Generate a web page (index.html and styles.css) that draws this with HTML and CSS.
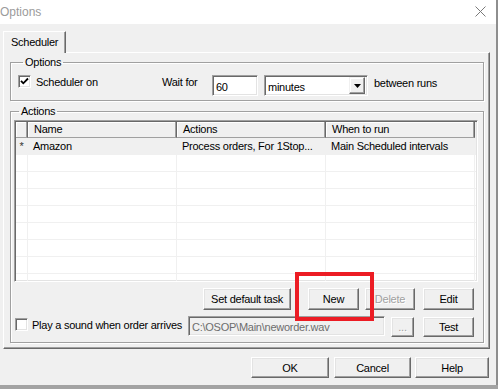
FILE: index.html
```html
<!DOCTYPE html>
<html>
	<head>
		<meta charset="UTF-8">
		<title>Options</title>
		<link rel="stylesheet" href="styles.css">
	</head>
	<body>
		<div class="window">
			<div class="titlebar">
				<span class="title">Options</span>
				<svg class="close" width="11" height="11" viewBox="0 0 11 11"><path d="M0.5 0.5L10.5 10.5M10.5 0.5L0.5 10.5" stroke="#7a7a7a" stroke-width="1" fill="none"/></svg>
			</div>
			<div class="client">
				<div class="tabs"><div class="tab">Scheduler</div></div>
				<div class="tabpage">
					<fieldset class="group group-options">
						<legend>Options</legend>
						<div class="options-row">
							<span class="checkbox"><svg width="9" height="9" viewBox="0 0 9 9"><path d="M1 3.8L3.3 6.3L8 1.5" stroke="#000" stroke-width="1.8" fill="none"/></svg></span>
							<span class="lbl sched-lbl">Scheduler on</span>
							<span class="lbl wait-lbl">Wait for</span>
							<input class="edit wait-edit" type="text" value="60">
							<div class="combo">
								<span class="combo-text">minutes</span>
								<span class="combo-btn"><svg width="7" height="4" viewBox="0 0 7 4"><path d="M0 0H7L3.5 4Z" fill="#000"/></svg></span>
							</div>
							<span class="lbl runs-lbl">between runs</span>
						</div>
					</fieldset>
					<fieldset class="group group-actions">
						<legend>Actions</legend>
						<div class="list">
							<div class="list-head">
								<div class="hcell ind"></div>
								<div class="hcell">Name</div>
								<div class="hcell">Actions</div>
								<div class="hcell">When to run</div>
							</div>
							<div class="list-body">
								<div class="lrow current"><div class="cell ind">*</div><div class="cell">Amazon</div><div class="cell">Process orders, For 1Stop...</div><div class="cell">Main Scheduled intervals</div></div>
								<div class="lrow"><div class="cell ind"></div><div class="cell"></div><div class="cell"></div><div class="cell"></div></div>
								<div class="lrow"><div class="cell ind"></div><div class="cell"></div><div class="cell"></div><div class="cell"></div></div>
								<div class="lrow"><div class="cell ind"></div><div class="cell"></div><div class="cell"></div><div class="cell"></div></div>
								<div class="lrow"><div class="cell ind"></div><div class="cell"></div><div class="cell"></div><div class="cell"></div></div>
								<div class="lrow"><div class="cell ind"></div><div class="cell"></div><div class="cell"></div><div class="cell"></div></div>
								<div class="lrow"><div class="cell ind"></div><div class="cell"></div><div class="cell"></div><div class="cell"></div></div>
								<div class="lrow"><div class="cell ind"></div><div class="cell"></div><div class="cell"></div><div class="cell"></div></div>
								<div class="lrow"><div class="cell ind"></div><div class="cell"></div><div class="cell"></div><div class="cell"></div></div>
							</div>
						</div>
						<div class="btn-row">
							<button class="btn btn-default">Set default task</button>
							<button class="btn btn-new">New</button>
							<button class="btn btn-delete" disabled>Delete</button>
							<button class="btn btn-edit">Edit</button>
						</div>
						<div class="sound-row">
							<span class="checkbox unchecked"></span>
							<span class="lbl sound-lbl">Play a sound when order arrives</span>
							<input class="edit path-edit" type="text" value="C:\OSOP\Main\neworder.wav" disabled>
							<button class="btn btn-browse" disabled>...</button>
							<button class="btn btn-test">Test</button>
						</div>
					</fieldset>
				</div>
				<div class="footer">
					<button class="btn btn-ok">OK</button>
					<button class="btn btn-cancel">Cancel</button>
					<button class="btn btn-help">Help</button>
				</div>
			</div>
			<div class="marker"></div>
		</div>
		<div class="taskbar"></div>
	</body>
</html>
```

FILE: styles.css
```css
*{
	padding: 0;
	margin: 0;
	box-sizing: border-box;
}
body{
	width: 498px;
	height: 389px;
	overflow: hidden;
	background: #f0f0f0;
	font-family: "Liberation Sans", Arial, sans-serif;
	font-size: 11px;
	letter-spacing: -0.25px;
	color: #000;
}
.window{
	position: relative;
	width: 498px;
	height: 385px;
	border-right: 2px solid #8e8e8e;
	background: #f0f0f0;
}
.titlebar{
	height: 24px;
	background: #fff;
	display: flex;
	align-items: center;
	justify-content: space-between;
	padding: 0 10px 0 0;
}
.title{
	font-size: 12px;
	letter-spacing: 0;
	color: #9b9b9b;
	margin-top: -1px;
}
.close{
	display: block;
	margin-top: -2px;
}
.client{
	padding: 7px 7px 0 3px;
}
.tabs{
	display: flex;
	height: 21px;
}
.tab{
	position: relative;
	z-index: 1;
	width: 63px;
	height: 22px;
	padding: 4px 0 0 7px;
	line-height: 13px;
	background: #f0f0f0;
	border-top: 1px solid #fff;
	border-left: 1px solid #fff;
	border-right: 1px solid #696969;
	box-shadow: inset -1px 0 #a0a0a0;
}
.tabpage{
	width: 487px;
	height: 297px;
	padding: 1px 0 0 6px;
	border: 1px solid;
	border-color: #fff #696969 #696969 #fff;
	box-shadow: inset -1px -1px #a0a0a0;
}
.group{
	width: 474px;
	min-width: 0;
	border: 1px solid #a0a0a0;
	box-shadow: 1px 1px 0 #fff, inset 1px 1px 0 #fff;
}
.group legend{
	margin-left: 5px;
	padding: 0 2px;
	line-height: 12px;
}
.group-options{
	padding: 7px 0 4px 7px;
	margin-top: 2px;
}
.options-row{
	display: flex;
	align-items: flex-start;
	height: 21px;
}
.lbl{
	line-height: 13px;
	white-space: nowrap;
}
.checkbox{
	display: flex;
	align-items: center;
	justify-content: center;
	width: 13px;
	height: 13px;
	background: #fff;
	border: 1px solid;
	border-color: #a0a0a0 #fff #fff #a0a0a0;
	box-shadow: inset 1px 1px #696969, inset -1px -1px #e3e3e3;
}
.sched-lbl{
	width: 126px;
	margin-left: 5px;
	margin-top: 1px;
}
.wait-lbl{
	width: 50px;
	margin-top: 1px;
}
.runs-lbl{
	margin-left: 6px;
	margin-top: 2px;
}
.edit{
	height: 21px;
	font: inherit;
	letter-spacing: inherit;
	color: #000;
	background: #fff;
	padding: 3px 2px 0 3px;
	border: 1px solid;
	border-color: #a0a0a0 #fff #fff #a0a0a0;
	box-shadow: inset 1px 1px #696969, inset -1px -1px #e3e3e3;
	outline: none;
}
.wait-edit{
	width: 46px;
}
.combo{
	display: flex;
	align-items: center;
	justify-content: space-between;
	width: 104px;
	height: 21px;
	margin-left: 6px;
	padding: 2px 2px 2px 3px;
	background: #fff;
	border: 1px solid;
	border-color: #a0a0a0 #fff #fff #a0a0a0;
	box-shadow: inset 1px 1px #696969, inset -1px -1px #e3e3e3;
}
.combo-text{
	padding-top: 2px;
}
.combo-btn{
	display: flex;
	align-items: center;
	justify-content: center;
	width: 16px;
	height: 17px;
	background: #f0f0f0;
	border: 1px solid;
	border-color: #f0f0f0 #696969 #696969 #f0f0f0;
	box-shadow: inset -1px -1px #a0a0a0, inset 1px 1px #fff;
}
.group-actions{
	margin-top: 4px;
	padding: 3px 0 5px 3px;
}
.list{
	width: 464px;
	height: 162px;
	overflow: hidden;
	background: #fff;
	border: 1px solid;
	border-color: #a0a0a0 #fff #fff #a0a0a0;
	box-shadow: inset 1px 1px #696969, inset -1px -1px #e3e3e3;
	padding: 1px;
}
.list-head{
	display: flex;
	height: 16px;
	background: #f0f0f0;
}
.hcell{
	width: 149px;
	height: 16px;
	padding: 1px 0 0 6px;
	line-height: 13px;
	border-right: 1px solid #696969;
	border-bottom: 1px solid #a0a0a0;
	box-shadow: inset -1px 0 #a0a0a0, inset 1px 1px #fff;
}
.ind{
	width: 12px;
	padding: 0;
}
.lrow{
	display: flex;
	height: 17px;
	border-bottom: 1px solid #f0f0f0;
}
.lrow.current{
	background: #f0f0f0;
}
.cell{
	width: 149px;
	padding: 0 0 0 5px;
	line-height: 16px;
	white-space: nowrap;
	overflow: hidden;
	border-right: 1px solid #f0f0f0;
}
.cell.ind{
	width: 12px;
	padding: 0;
	text-align: center;
	color: #333;
}
.btn-row{
	display: flex;
	justify-content: flex-end;
	height: 22px;
	margin-top: 6px;
	padding-right: 9px;
}
.btn{
	height: 22px;
	font: inherit;
	letter-spacing: inherit;
	color: #000;
	background: #f0f0f0;
	border: 1px solid;
	border-color: #fff #696969 #696969 #fff;
	box-shadow: inset -1px -1px #a0a0a0, inset 1px 1px #e3e3e3;
	text-align: center;
}
.btn:disabled{
	color: #a0a0a0;
	text-shadow: 1px 1px 0 #fff;
}
.btn-default{
	width: 88px;
}
.btn-new{
	width: 51px;
	margin-left: 17px;
}
.btn-delete{
	width: 50px;
	margin-left: 6px;
}
.btn-edit{
	width: 51px;
	margin-left: 8px;
}
.sound-row{
	display: flex;
	align-items: flex-start;
	height: 21px;
	margin-top: 6px;
}
.sound-row .checkbox{
	margin: 2px 0 0 1px;
}
.sound-lbl{
	width: 156px;
	margin: 3px 0 0 4px;
}
.path-edit{
	width: 197px;
	height: 20px;
	padding-top: 2px;
	background: #f0f0f0;
	color: #6d6d6d;
	-webkit-text-fill-color: #6d6d6d;
}
.btn-browse{
	width: 23px;
	height: 20px;
	margin: 1px 0 0 6px;
}
.btn-test{
	width: 51px;
	height: 20px;
	margin: 1px 0 0 9px;
}
.footer{
	display: flex;
	justify-content: flex-end;
	padding-top: 8px;
}
.footer .btn{
	height: 21px;
}
.btn-ok{
	width: 78px;
}
.btn-cancel{
	width: 77px;
	margin-left: 5px;
}
.btn-help{
	width: 74px;
	margin-left: 4px;
}
.marker{
	position: absolute;
	left: 295px;
	top: 272px;
	width: 79px;
	height: 49px;
	border: 4px solid #ec1c24;
}
.taskbar{
	height: 4px;
	background: #a3a3a3;
}
```
